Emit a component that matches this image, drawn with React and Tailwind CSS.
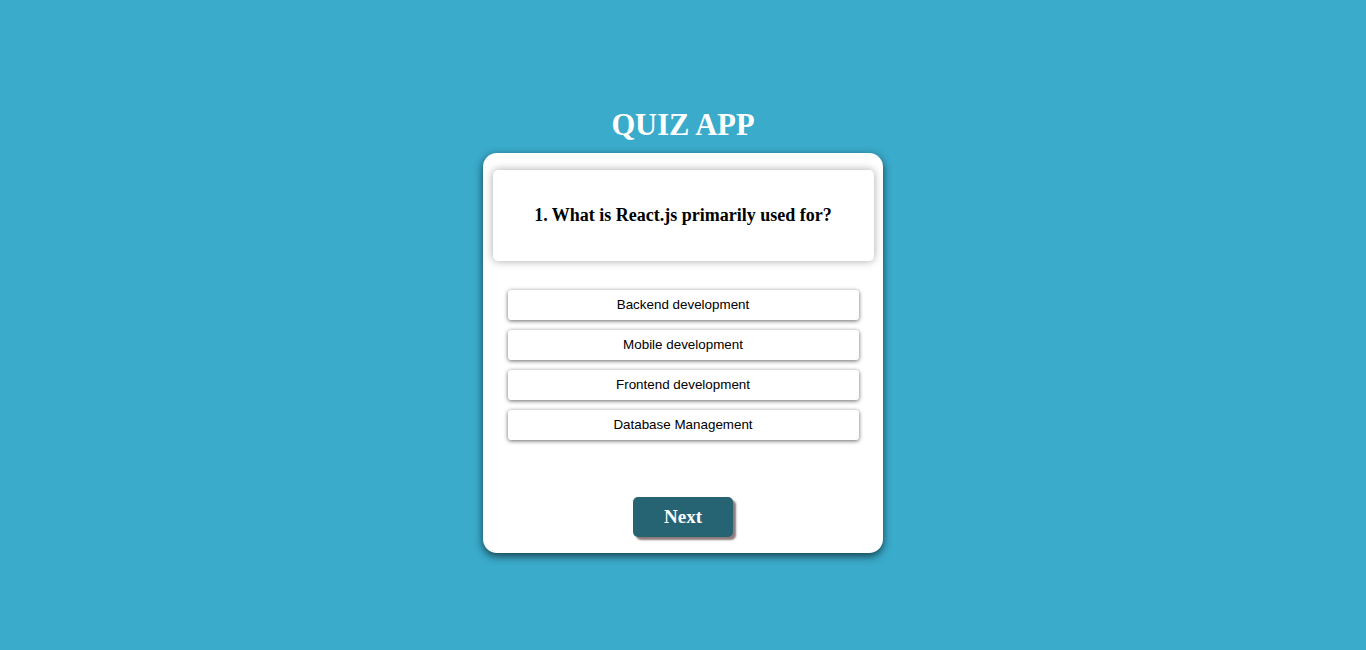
import React from 'react'

const options = ['Backend development', 'Mobile development', 'Frontend development', 'Database Management']

export default function App() {
  return (
    <div className="min-h-screen bg-[#3aabcb] flex flex-col items-center pt-[107px]">
      <h1 className="text-[30.5px] leading-[37px] font-bold text-white font-['Liberation_Serif',serif]">QUIZ APP</h1>
      <div className="mt-[9px] w-[400px] h-[400px] bg-white rounded-[14px] shadow-[0_3px_8px_rgba(0,0,0,0.65)] flex flex-col items-center pt-[17px]">
        <div className="w-[381px] h-[91px] bg-white rounded-[5px] shadow-[0_0_8px_rgba(0,0,0,0.35)] flex items-center justify-center">
          <h3 className="text-[18px] font-bold text-black font-['Liberation_Serif',serif]">1. What is React.js primarily used for?</h3>
        </div>
        <div className="mt-[29px] flex flex-col gap-[10px]">
          {options.map(o => (
            <button key={o} className="w-[351px] h-[30px] bg-white rounded-[3px] shadow-[0_1px_4px_rgba(0,0,0,0.6)] text-[13.4px] text-black font-['Liberation_Sans',Arial,sans-serif]">
              {o}
            </button>
          ))}
        </div>
        <button className="mt-[57px] w-[100px] h-[40px] bg-[#266373] rounded-[5px] shadow-[3px_3px_2px_#8c7b7b] text-white text-[19px] font-bold font-['Liberation_Serif',serif]">
          Next
        </button>
      </div>
    </div>
  )
}
